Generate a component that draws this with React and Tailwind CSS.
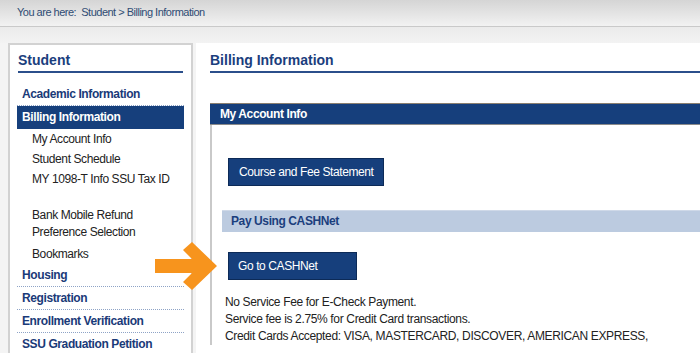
export default function App() {
  const subItem = "pl-[14px] py-[3px] leading-[14px] text-[12px] tracking-[-0.4px] text-[#222]";
  const boldItem =
    "-mx-[1px] pl-[5px] py-[4px] leading-[14px] text-[12px] tracking-[-0.4px] font-bold text-[#1a3a78] border-b border-dotted border-[#8ea3c6]";
  return (
    <div
      className="relative w-[700px] h-[353px] overflow-hidden bg-[#f4f4f4]"
      style={{ fontFamily: '"Liberation Sans", Arial, sans-serif' }}
    >
      {/* breadcrumb */}
      <div className="h-[27px] bg-gradient-to-b from-[#d5d5d5] to-[#f2f2f2] border-b border-[#c9c9c9] pl-[17px] pt-[5px] text-[11px] tracking-[-0.5px] leading-[14px] text-[#2f4c74]">
        You are here:&nbsp; Student &gt; Billing Information
      </div>
      <div className="h-[16px] bg-gradient-to-b from-[#ebebeb] to-[#f3f3f3]" />

      <div className="flex">
        {/* sidebar */}
        <aside className="ml-[8px] w-[185px] h-[320px] shrink-0 bg-white border-2 border-[#d2d2d2] px-[8px] pt-[7px]">
          <div className="text-[14px] leading-[17px] font-bold text-[#1b3e7d] pb-[2px] border-b-2 border-[#2b4f8b]">
            Student
          </div>
          <div className="mt-[10px]">
            <div className={boldItem}>Academic Information</div>
            <div className="-mx-[1px] pl-[5px] h-[23px] leading-[23px] text-[12px] tracking-[-0.4px] font-bold text-white bg-[#163f7c]">
              Billing Information
            </div>
            <div className={subItem}>My Account Info</div>
            <div className={subItem}>Student Schedule</div>
            <div className={subItem}>MY 1098-T Info SSU Tax ID</div>
            <div className="h-[15px]" />
            <div className="pl-[14px] py-[3px] leading-[17px] text-[12px] tracking-[-0.4px] text-[#222]">
              Bank Mobile Refund
              <br />
              Preference Selection
            </div>
            <div className={subItem}>Bookmarks</div>
            <div className={boldItem}>Housing</div>
            <div className={boldItem}>Registration</div>
            <div className={boldItem}>Enrollment Verification</div>
            <div className={boldItem}>SSU Graduation Petition</div>
          </div>
        </aside>

        {/* main */}
        <main className="ml-[3px] flex-1 h-[320px] bg-white pl-[14px] pt-[9px]">
          <div className="text-[14px] leading-[17px] font-bold text-[#1b3e7d] pb-[2px] border-b-2 border-[#2b4f8b]">
            Billing Information
          </div>
          <div className="mt-[30px] border-l-2 border-[#c9c9c9]">
            <div className="-ml-[2px] h-[22px] bg-[#163f7c] border-t border-[#8a7f70] border-b border-b-[#8a8a8a] pl-[10px] leading-[20px] text-[12px] tracking-[-0.4px] font-bold text-white">
              My Account Info
            </div>
            <div className="pl-[16px] pt-[33px]">
              <button className="h-[28px] px-[10px] bg-[#163f7c] border border-[#0c2a57] text-white text-[12px] tracking-[-0.4px] leading-[26px]">
                Course and Fee Statement
              </button>
            </div>
            <div className="ml-[10px] mt-[24px] h-[22px] bg-[#bccbe0] border-t border-[#cfd9e8] pl-[9px] leading-[21px] text-[12px] tracking-[-0.4px] font-bold text-[#1b3e7d]">
              Pay Using CASHNet
            </div>
            <div className="pl-[16px] pt-[20px]">
              <button className="h-[28px] w-[129px] text-left px-[9px] bg-[#163f7c] border border-[#0c2a57] text-white text-[12px] tracking-[-0.4px] leading-[26px]">
                Go to CASHNet
              </button>
            </div>
            <div className="pl-[13px] pt-[14px] text-[12px] tracking-[-0.35px] leading-[17px] text-[#222]">
              <div>No Service Fee for E-Check Payment.</div>
              <div>Service fee is 2.75% for Credit Card transactions.</div>
              <div>Credit Cards Accepted: VISA, MASTERCARD, DISCOVER, AMERICAN EXPRESS,</div>
            </div>
          </div>
        </main>
      </div>

      {/* orange arrow overlay */}
      <svg
        className="absolute left-[155px] top-[242px]"
        width="64"
        height="50"
        viewBox="0 0 64 50"
      >
        <polygon
          points="0,17 37,17 28,8 37,0 62,24 37,48 28,40 37,31 0,31"
          fill="#f7941d"
        />
      </svg>
    </div>
  );
}
